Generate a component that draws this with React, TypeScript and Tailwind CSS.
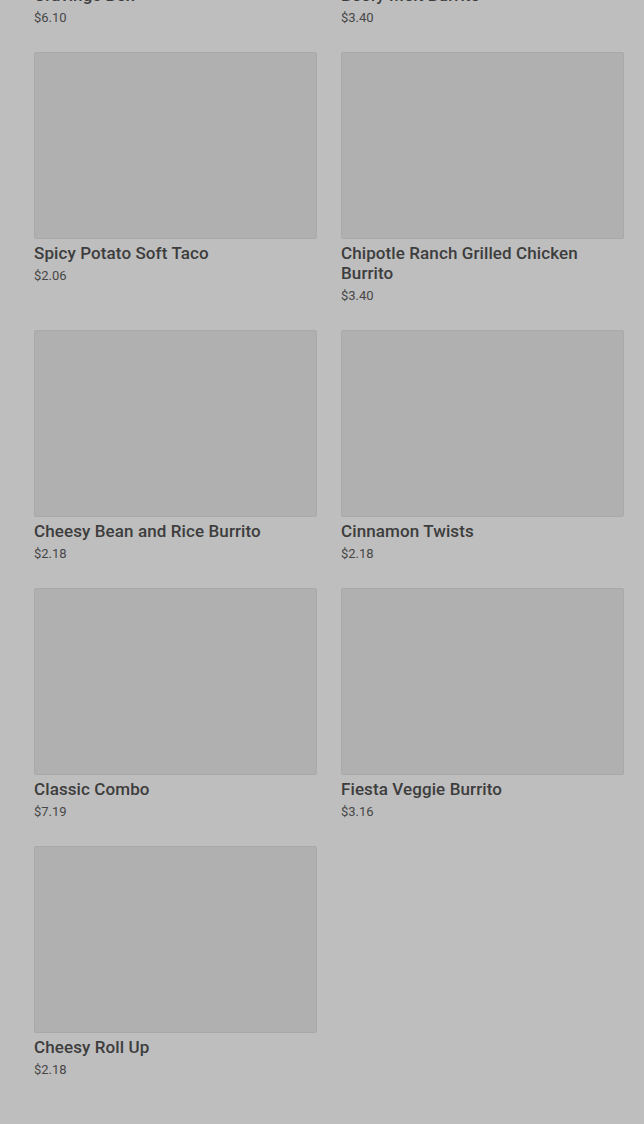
// Menu category grid, scrolled partway down, under a dim overlay.
type Item = { name: string; price: string };

const items: Item[] = [
  { name: "Cravings Box", price: "$6.10" },
  { name: "Beefy Melt Burrito", price: "$3.40" },
  { name: "Spicy Potato Soft Taco", price: "$2.06" },
  { name: "Chipotle Ranch Grilled Chicken Burrito", price: "$3.40" },
  { name: "Cheesy Bean and Rice Burrito", price: "$2.18" },
  { name: "Cinnamon Twists", price: "$2.18" },
  { name: "Classic Combo", price: "$7.19" },
  { name: "Fiesta Veggie Burrito", price: "$3.16" },
  { name: "Cheesy Roll Up", price: "$2.18" },
];

function ItemCard({ item }: { item: Item }) {
  return (
    <div className="flex flex-col">
      {/* image placeholder — nothing loaded yet */}
      <div className="h-[187px] rounded-[2px] border border-[#a9a9a9] bg-[#b0b0b0]" />
      <div className="mt-1 text-[17px] leading-5 font-medium tracking-[0.1px] text-[#3d3d3d]">
        {item.name}
      </div>
      <div className="mt-[3px] text-[13px] leading-5 text-[#474747]">{item.price}</div>
    </div>
  );
}

export default function App() {
  return (
    <div
      className="h-[1124px] w-[644px] overflow-hidden bg-[#bebebe]"
      style={{ fontFamily: "Roboto, 'Liberation Sans', sans-serif" }}
    >
      <div className="mt-[-206px] pl-[34px] pr-5">
        <div className="grid grid-cols-2 gap-x-6 gap-y-6">
          {items.map((it) => (
            <ItemCard key={it.name} item={it} />
          ))}
        </div>
        <div className="pt-[41px] text-[22px] leading-tight font-bold text-[#3a3a3a]">
          Drinks
        </div>
      </div>
    </div>
  );
}
